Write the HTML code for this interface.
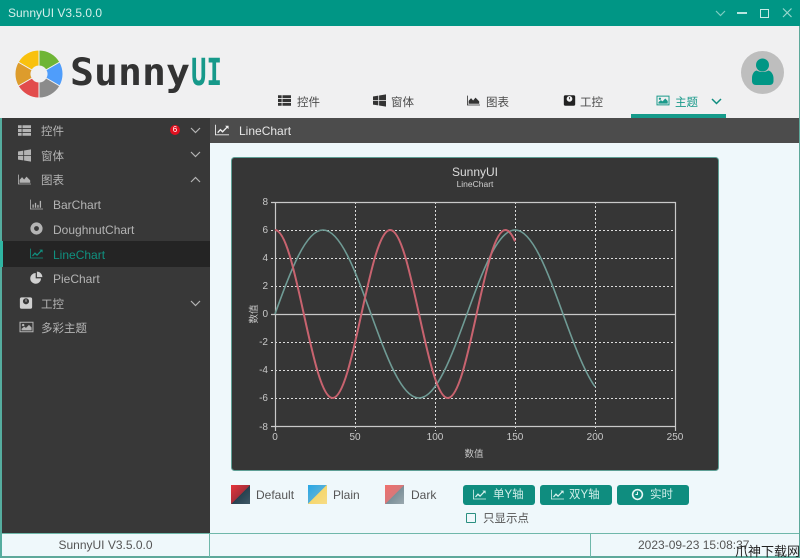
<!DOCTYPE html>
<html lang="zh">
<head>
<meta charset="utf-8">
<title>SunnyUI</title>
<style>
html,body{margin:0;padding:0}
body{width:800px;height:558px;position:relative;overflow:hidden;background:#eff8fb;font-family:"Liberation Sans","Noto Sans CJK SC",sans-serif;font-size:12px;color:#444}
#w{position:absolute;left:0;top:0;width:800px;height:558px;overflow:hidden;background:#eff8fb;filter:blur(.3px)}
.a{position:absolute;white-space:nowrap}
.t{position:absolute;white-space:nowrap;line-height:16px;height:16px}
svg.i{position:absolute;fill:currentColor;overflow:visible}
.side{color:#b4b4b4}
.tab{color:#4a4a4a;font-size:11.5px}
.btn{position:absolute;top:485px;width:72px;height:20px;background:#0f8d7f;border-radius:3px}
.sw{position:absolute;top:485px;width:19px;height:19px}
.chev{position:absolute;fill:none;stroke:currentColor;stroke-width:1.2}
</style>
</head>
<body>
<svg width="0" height="0" style="position:absolute">
<defs>
<symbol id="list" viewBox="0 0 16 16"><path d="M0 1.5h4.5v3.6H0zM5.5 1.5H16v3.6H5.5zM0 6.2h4.5v3.6H0zM5.5 6.2H16v3.6H5.5zM0 10.9h4.5v3.6H0zM5.5 10.9H16v3.6H5.5z"/></symbol>
<symbol id="win" viewBox="0 0 16 16"><path d="M0 3l6.5-1v5.5H0zM7.5 1.8L16 .5v7H7.5zM0 8.5h6.5V14L0 13zM7.5 8.5H16v7l-8.5-1.3z"/></symbol>
<symbol id="area" viewBox="0 0 16 16"><path d="M0 2h1v11h15v1H0z"/><path d="M2 12V8.5l3-3.5 2.5 3 3-3.5 4.5 4.5V12z"/></symbol>
<symbol id="bar" viewBox="0 0 16 16"><path d="M0 2h1v11h15v1H0z"/><path d="M3 8h1.6v4H3zM6 6h1.6v6H6zM9 8.5h1.6V12H9zM12 3.5h1.6V12H12z"/></symbol>
<symbol id="chrome" viewBox="0 0 16 16"><path fill-rule="evenodd" d="M8 .5a7.5 7.5 0 1 1 0 15 7.5 7.5 0 0 1 0-15zM8 5a3 3 0 1 0 0 6 3 3 0 0 0 0-6z"/></symbol>
<symbol id="line" viewBox="0 0 16 16"><path d="M0 2h1v11h15v1H0z"/><path d="M2.5 10.5l3.6-4 2.6 2.4L13 4.5l-1.5-1.3H15.5V7L14 5.6l-5.3 5.5-2.6-2.4-2.5 2.9z"/></symbol>
<symbol id="pie" viewBox="0 0 16 16"><path d="M7 2.5V9h6.5A6.6 6.6 0 1 1 7 2.5z"/><path d="M8.5 .8A6.8 6.8 0 0 1 15.2 7.5H8.5z"/></symbol>
<symbol id="bag" viewBox="0 0 16 16"><path fill-rule="evenodd" d="M3 1.5h10a2 2 0 0 1 2 2v9a2 2 0 0 1-2 2H3a2 2 0 0 1-2-2v-9a2 2 0 0 1 2-2zM8 2.5a3.5 3.5 0 1 0 0 7 3.5 3.5 0 0 0 0-7z"/><path d="M7.5 3.8h1v2.7h-1z"/></symbol>
<symbol id="img" viewBox="0 0 16 16"><path fill-rule="evenodd" d="M0 2h16v12H0zM1.2 3.2v9.6h13.6V3.2z"/><circle cx="4.2" cy="5.8" r="1.4"/><path d="M2.4 11.8V10l3-2.4 2 1.4 3.4-3.4 3 3v3.2z"/></symbol>
<symbol id="clock" viewBox="0 0 16 16"><path fill-rule="evenodd" d="M8 1a7 7 0 1 1 0 14A7 7 0 0 1 8 1zM8 3a5 5 0 1 0 0 10A5 5 0 0 0 8 3z"/><path d="M7.3 4.6h1.3v4H5.5V7.4h1.8z"/></symbol>
</defs>
</svg>
<div id="w">
<!-- title bar -->
<div class="a" style="left:0;top:0;width:800px;height:26px;background:#009685"></div>
<div class="t" style="left:8px;top:5px;color:#d5efeb;font-size:12px">SunnyUI V3.5.0.0</div>
<svg class="chev" style="left:715px;top:10px;color:#7fcdc2" width="11" height="7"><path d="M1 1l4.500 4.500L10 1"/></svg>
<div class="a" style="left:737px;top:12px;width:10px;height:1.5px;background:#b8e5df"></div>
<div class="a" style="left:760px;top:9px;width:6.500px;height:6.500px;border:1px solid #c8ebe6"></div>
<svg class="chev" style="left:782px;top:8px;color:#98d8ce" width="11" height="10"><path d="M1 .5l8.500 8.500M9.500 .5L1 9"/></svg>

<!-- header -->
<div class="a" style="left:0;top:26px;width:800px;height:92px;background:#f0f0f1"></div>
<svg class="a" style="left:0;top:26px" width="240" height="92" viewBox="0 26 240 92">
<g stroke="#f0f0f1" stroke-width="1">
<path fill="#6fb536" d="M39 50A24 24 0 0 1 59.800 62L45.930 70A8 8 0 0 0 39 66Z"/>
<path fill="#4f9dfb" d="M59.800 62A24 24 0 0 1 59.800 86L45.930 78A8 8 0 0 0 45.930 70Z"/>
<path fill="#8b8b8b" d="M59.800 86A24 24 0 0 1 39 98L39 82A8 8 0 0 0 45.930 78Z"/>
<path fill="#e24c4c" d="M39 98A24 24 0 0 1 18.200 86L32.070 78A8 8 0 0 0 39 82Z"/>
<path fill="#dd9c2c" d="M18.200 86A24 24 0 0 1 18.200 62L32.070 70A8 8 0 0 0 32.070 78Z"/>
<path fill="#f9c10e" d="M18.200 62A24 24 0 0 1 39 50L39 66A8 8 0 0 0 32.070 70Z"/>
</g>
<text x="70" y="85" font-family="'DejaVu Sans Mono','Liberation Mono',monospace" font-weight="700" font-size="37" fill="#333" textLength="120" lengthAdjust="spacingAndGlyphs">Sunny</text>
<text x="191" y="85" font-family="'DejaVu Sans Mono','Liberation Mono',monospace" font-weight="700" font-size="37" fill="#16998a" textLength="31" lengthAdjust="spacingAndGlyphs">UI</text>
</svg>

<!-- tabs -->
<svg class="i" style="left:278px;top:94px;color:#333" width="13" height="13"><use href="#list"/></svg>
<div class="t tab" style="left:297px;top:95px">控件</div>
<svg class="i" style="left:373px;top:94px;color:#333" width="13" height="13"><use href="#win"/></svg>
<div class="t tab" style="left:391px;top:95px">窗体</div>
<svg class="i" style="left:467px;top:94px;color:#333" width="13" height="13"><use href="#area"/></svg>
<div class="t tab" style="left:486px;top:95px">图表</div>
<svg class="i" style="left:563px;top:94px;color:#222" width="13" height="13"><use href="#bag"/></svg>
<div class="t tab" style="left:580px;top:95px">工控</div>
<svg class="i" style="left:656px;top:94px;color:#1a9a8b" width="14" height="13"><use href="#img"/></svg>
<div class="t tab" style="left:675px;top:95px;color:#1a9a8b">主题</div>
<svg class="chev" style="left:711px;top:98px;color:#0f8d7f;stroke-width:1.5" width="11" height="7"><path d="M1 1l4.500 4.500L10 1"/></svg>
<div class="a" style="left:631px;top:114px;width:95px;height:4px;background:#159b8b"></div>

<!-- avatar -->
<div class="a" style="left:741px;top:51px;width:43px;height:43px;border-radius:50%;background:#bebebe"></div>
<svg class="a" style="left:741px;top:51px" width="43" height="43"><circle cx="21.500" cy="14" r="6.500" fill="#009685"/><path fill="#009685" d="M15 34c-2.500 0-4-1.500-4-4v-3c0-3.500 2-7 4.500-7.500 3.500 2 8.500 2 12 0 2.500.5 5 4 5 7.500v3c0 2.500-1.500 4-4 4z"/></svg>

<!-- sub header -->
<div class="a" style="left:210px;top:118px;width:590px;height:25px;background:#4c4c4c"></div>
<svg class="i" style="left:215px;top:123px;color:#f0f0f0" width="14" height="14"><use href="#line"/></svg>
<div class="t" style="left:239px;top:123px;color:#e6e6e6">LineChart</div>

<!-- sidebar -->
<div class="a" style="left:0;top:118px;width:210px;height:415px;background:#383838"></div>
<div class="a" style="left:3px;top:241px;width:207px;height:26px;background:#242424"></div>
<div class="a" style="left:0;top:118px;width:2px;height:440px;background:#55ad9f"></div>
<div class="a" style="left:0;top:241px;width:3px;height:26px;background:#2fb5a2"></div>

<svg class="i side" style="left:18px;top:124px" width="13" height="13"><use href="#list"/></svg>
<div class="t side" style="left:41px;top:124px;font-size:11.500px">控件</div>
<div class="a" style="left:170px;top:125px;width:10px;height:10px;border-radius:50%;background:#e0101f;color:#fff;font-size:8px;line-height:10px;text-align:center">6</div>
<svg class="chev side" style="left:190px;top:127px" width="11" height="7"><path d="M1 1l4.500 4.500L10 1"/></svg>

<svg class="i side" style="left:18px;top:149px" width="13" height="13"><use href="#win"/></svg>
<div class="t side" style="left:41px;top:149px;font-size:11.500px">窗体</div>
<svg class="chev side" style="left:190px;top:151px" width="11" height="7"><path d="M1 1l4.500 4.500L10 1"/></svg>

<svg class="i side" style="left:18px;top:173px" width="13" height="13"><use href="#area"/></svg>
<div class="t side" style="left:41px;top:173px;font-size:11.500px">图表</div>
<svg class="chev side" style="left:190px;top:176px" width="11" height="7"><path d="M1 6l4.500-4.500L10 6"/></svg>

<svg class="i side" style="left:30px;top:198px" width="13" height="13"><use href="#bar"/></svg>
<div class="t side" style="left:53px;top:197px">BarChart</div>

<svg class="i side" style="left:30px;top:222px" width="13" height="13"><use href="#chrome"/></svg>
<div class="t side" style="left:53px;top:222px">DoughnutChart</div>

<svg class="i" style="left:30px;top:247px;color:#109180" width="13" height="13"><use href="#line"/></svg>
<div class="t" style="left:53px;top:247px;color:#109180">LineChart</div>

<svg class="i" style="left:30px;top:271px;color:#d0d0d0" width="13" height="13"><use href="#pie"/></svg>
<div class="t side" style="left:53px;top:271px">PieChart</div>

<svg class="i" style="left:19px;top:296px;color:#d0d0d0" width="14" height="14"><use href="#bag"/></svg>
<div class="t side" style="left:41px;top:297px;font-size:11.500px">工控</div>
<svg class="chev side" style="left:190px;top:300px" width="11" height="7"><path d="M1 1l4.500 4.500L10 1"/></svg>

<svg class="i side" style="left:19px;top:320px" width="15" height="14"><use href="#img"/></svg>
<div class="t side" style="left:41px;top:321px;font-size:11.500px">多彩主题</div>

<!-- chart -->
<svg class="a" style="left:231px;top:157px" width="488" height="314" viewBox="231 157 488 314">
<rect x="231.500" y="157.500" width="487" height="313" rx="3" fill="#363636" stroke="#5e9f95" stroke-width="1"/>
<g stroke="#dcdcdc" stroke-width="1" stroke-dasharray="2 2" fill="none">
<path d="M271 230.500H675M271 258.500H675M271 286.500H675M271 342.500H675M271 370.500H675M271 398.500H675"/>
<path d="M355.500 202V431M435.500 202V431M515.500 202V431M595.500 202V431"/>
</g>
<path fill="none" stroke="#c9c9c9" stroke-width="1.200" d="M271 202.500H675.500V431M275.500 202V431M271 426.500H675.500M271 314.500H675.500"/>
<path fill="none" stroke="#6f9b95" stroke-width="1.600" d="M275 314C290.650 270.970 305.630 230 323 230C340.370 230 355.350 270.970 371 314C386.650 357.030 401.630 398 419 398C436.370 398 451.350 357.030 467 314C482.650 270.970 497.630 230 515 230C532.370 230 547.350 270.970 563 314C573.670 343.300 584.330 372 595 386.700"/>
<path fill="none" stroke="#c8636f" stroke-width="2" d="M275 230C285.420 230 294.410 270.970 303.800 314C313.190 357.030 322.180 398 332.600 398C343.020 398 352.010 357.030 361.400 314C370.790 270.970 379.780 230 390.200 230C400.620 230 409.610 270.970 419 314C428.390 357.030 437.380 398 447.800 398C458.220 398 467.210 357.030 476.600 314C485.990 270.970 494.980 230 505.400 230C508.600 230 511.800 234 515 241.300"/>
<g font-family="'Liberation Sans','Noto Sans CJK SC',sans-serif" fill="#c8c8c8" font-size="10">
<text x="475" y="176" text-anchor="middle" font-size="12" fill="#dcdcdc">SunnyUI</text>
<text x="475" y="187" text-anchor="middle" font-size="8.500" fill="#d0d0d0">LineChart</text>
<g text-anchor="end">
<text x="268" y="205">8</text><text x="268" y="233">6</text><text x="268" y="261">4</text><text x="268" y="289">2</text><text x="268" y="317">0</text><text x="268" y="345">-2</text><text x="268" y="373">-4</text><text x="268" y="401">-6</text><text x="268" y="430">-8</text>
</g>
<g text-anchor="middle">
<text x="275" y="440">0</text><text x="355" y="440">50</text><text x="435" y="440">100</text><text x="515" y="440">150</text><text x="595" y="440">200</text><text x="675" y="440">250</text>
<text x="474" y="457" font-size="9.500">数值</text>
<text transform="translate(257 314) rotate(-90)" font-size="9.500">数值</text>
</g>
</g>
</svg>

<!-- style swatches -->
<div class="sw" style="left:231px;background:linear-gradient(135deg,#e8343a 0%,#a82f3a 50%,#26414f 50%,#3f5866 100%)"></div>
<div class="t" style="left:256px;top:487px;color:#555">Default</div>
<div class="sw" style="left:308px;background:linear-gradient(135deg,#27a7e6 0%,#56b0d8 50%,#f5d76e 50%,#f7dc85 100%)"></div>
<div class="t" style="left:333px;top:487px;color:#555">Plain</div>
<div class="sw" style="left:385px;background:linear-gradient(135deg,#f0706c 0%,#d8787a 50%,#7a8f98 50%,#9aa8ae 100%)"></div>
<div class="t" style="left:411px;top:487px;color:#555">Dark</div>

<!-- buttons -->
<div class="btn" style="left:463px"></div>
<svg class="i" style="left:473px;top:488px;color:#d8f2ee" width="13" height="13"><use href="#line"/></svg>
<div class="t" style="left:493px;top:487px;color:#cfeee9;font-size:11.500px">单Y轴</div>
<div class="btn" style="left:540px"></div>
<svg class="i" style="left:551px;top:488px;color:#d8f2ee" width="13" height="13"><use href="#line"/></svg>
<div class="t" style="left:569px;top:487px;color:#cfeee9;font-size:11.500px">双Y轴</div>
<div class="btn" style="left:617px"></div>
<svg class="i" style="left:631px;top:488px;color:#e6f7f4" width="13" height="13"><use href="#clock"/></svg>
<div class="t" style="left:650px;top:487px;color:#cfeee9;font-size:11.500px">实时</div>

<div class="a" style="left:466px;top:513px;width:8px;height:8px;border:1.500px solid #2a8f80;border-radius:1px"></div>
<div class="t" style="left:483px;top:511px;color:#555;font-size:11.500px">只显示点</div>

<!-- status -->
<div class="a" style="left:2px;top:533px;width:798px;height:1px;background:#6fb8aa"></div>
<div class="a" style="left:2px;top:556px;width:798px;height:2px;background:#5ea99b"></div>
<div class="a" style="left:209px;top:533px;width:1px;height:24px;background:#6fb8aa"></div>
<div class="a" style="left:590px;top:533px;width:1px;height:24px;background:#6fb8aa"></div>
<div class="a" style="left:799px;top:26px;width:1px;height:532px;background:#5ea99b"></div>
<div class="t" style="left:2px;top:537px;width:207px;text-align:center;color:#555">SunnyUI V3.5.0.0</div>
<div class="t" style="left:638px;top:537px;color:#555">2023-09-23 15:08:37</div>
<div class="t" style="left:735px;top:544px;width:65px;font-size:13px;color:#222">爪神下载网</div>
</div>
</body>
</html>
